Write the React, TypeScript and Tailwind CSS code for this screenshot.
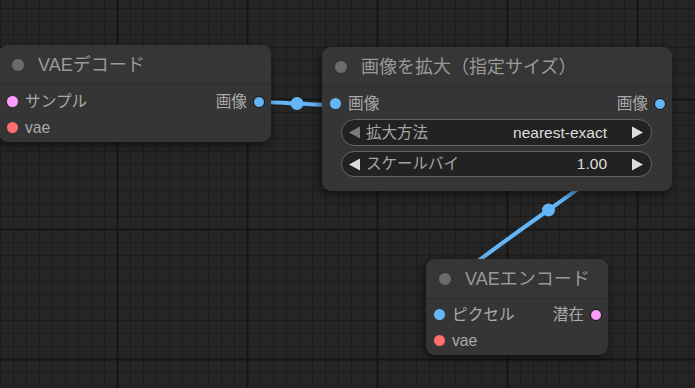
import React from "react";

const FONT = { fontFamily: '"Liberation Sans", "Noto Sans CJK JP", Arial, sans-serif' };

type Slot = { label: string; color: string };

function Dot({ color, out }: { color: string; out?: boolean }) {
  return (
    <span
      className={
        out
          ? "block w-[12px] h-[12px] rounded-full border-[1.5px] border-[#111] shrink-0"
          : "block w-[11px] h-[11px] rounded-full shrink-0"
      }
      style={{ backgroundColor: color }}
    />
  );
}

function Row({ input, output }: { input?: Slot; output?: Slot }) {
  return (
    <div className="h-[26px] flex items-center justify-between">
      <div className="flex items-center pl-[7.5px] gap-[7.5px]">
        {input && (
          <>
            <Dot color={input.color} />
            <span className="text-[15.7px] leading-none text-[#aaaaaa]">{input.label}</span>
          </>
        )}
      </div>
      <div className="flex items-center pr-[6px] gap-[6px]">
        {output && (
          <>
            <span className="text-[15.7px] leading-none text-[#aaaaaa]">{output.label}</span>
            <Dot color={output.color} out />
          </>
        )}
      </div>
    </div>
  );
}

function Arrow({ dir, dim }: { dir: "l" | "r"; dim?: boolean }) {
  return (
    <svg width="13" height="13" viewBox="0 0 13 13" className="shrink-0">
      <polygon
        points={dir === "l" ? "12,0.5 12,12.5 1,6.5" : "1,0.5 1,12.5 12,6.5"}
        fill={dim ? "#7a7a7a" : "#dddddd"}
      />
    </svg>
  );
}

function Widget({ label, value, dimLeft, h }: { label: string; value: string; dimLeft?: boolean; h: string }) {
  return (
    <div className={`${h} rounded-full border-[1.5px] border-[#646464] bg-[#222222] flex items-center pl-[6px] pr-[7px]`}>
      <Arrow dir="l" dim={dimLeft} />
      <span className="ml-[5px] text-[15.5px] leading-none text-[#a5a5a5]">{label}</span>
      <span className="ml-auto text-[15.5px] leading-none text-[#dddddd]">{value}</span>
      <span className="ml-[24px]">
        <Arrow dir="r" />
      </span>
    </div>
  );
}

function Node({
  title,
  className,
  children,
}: {
  title: string;
  className: string;
  children: React.ReactNode;
}) {
  return (
    <div
      className={`absolute rounded-[9px] bg-[#353535] shadow-[-2px_3px_8px_rgba(0,0,0,0.55)] overflow-hidden ${className}`}
    >
      <div className="h-[40px] flex items-center pl-[13px] bg-[#363636] border-b border-[#2c2c2c]">
        <span className="block w-[12px] h-[12px] rounded-full bg-[#6b6b6b]" />
        <span className="ml-[14px] text-[18px] leading-none text-[#9a9a9a]">{title}</span>
      </div>
      {children}
    </div>
  );
}

function bez(a: [number, number], b: [number, number]) {
  const d = Math.hypot(b[0] - a[0], b[1] - a[1]) * 0.25;
  const c1: [number, number] = [a[0] + d, a[1]];
  const c2: [number, number] = [b[0] - d, b[1]];
  const m: [number, number] = [
    (a[0] + 3 * c1[0] + 3 * c2[0] + b[0]) / 8,
    (a[1] + 3 * c1[1] + 3 * c2[1] + b[1]) / 8,
  ];
  return { d: `M${a[0]},${a[1]} C${c1[0]},${c1[1]} ${c2[0]},${c2[1]} ${b[0]},${b[1]}`, m };
}

export default function App() {
  const l1 = bez([259, 102], [335, 105]);
  const l2 = bez([659, 105], [438, 315]);
  const BLUE = "#64b5f6";
  const PINK = "#ff9cf9";
  const RED = "#ff6e6e";
  return (
    <div className="relative w-[695px] h-[388px] overflow-hidden bg-[#252525]" style={FONT}>
      <svg className="absolute inset-0" width="695" height="388">
        <defs>
          <pattern id="minor" x="0" y="8" width="13" height="13" patternUnits="userSpaceOnUse">
            <rect x="0" y="0" width="1" height="13" fill="#1c1c1c" />
            <rect x="0" y="0" width="13" height="1" fill="#1c1c1c" />
          </pattern>
          <pattern id="major" x="116.5" y="98.5" width="130" height="130" patternUnits="userSpaceOnUse">
            <rect x="0" y="0" width="2" height="130" fill="#151515" />
            <rect x="0" y="0" width="130" height="2" fill="#151515" />
          </pattern>
        </defs>
        <rect width="695" height="388" fill="url(#minor)" />
        <rect width="695" height="388" fill="url(#major)" />
        <path d={l1.d} stroke={BLUE} strokeWidth="4" fill="none" />
        <circle cx={l1.m[0]} cy={l1.m[1]} r="6.5" fill={BLUE} />
        <path d={l2.d} stroke={BLUE} strokeWidth="4" fill="none" />
        <circle cx={l2.m[0]} cy={l2.m[1]} r="6.5" fill={BLUE} />
      </svg>

      <Node title="VAEデコード" className="left-[-1px] top-[45px] w-[272px] h-[97px]">
        <div className="pt-[4px]">
          <Row input={{ label: "サンプル", color: PINK }} output={{ label: "画像", color: BLUE }} />
          <Row input={{ label: "vae", color: RED }} />
        </div>
      </Node>

      <Node title="画像を拡大（指定サイズ）" className="left-[322px] top-[47px] w-[350px] h-[144px]">
        <div className="pt-[4px]">
          <Row input={{ label: "画像", color: BLUE }} output={{ label: "画像", color: BLUE }} />
          <div className="flex flex-col gap-[5px] pl-[19px] pr-[20px] pt-[2px]">
            <Widget h="h-[27px]" label="拡大方法" value="nearest-exact" dimLeft />
            <Widget h="h-[26px]" label="スケールバイ" value="1.00" />
          </div>
        </div>
      </Node>

      <Node title="VAEエンコード" className="left-[426px] top-[259px] w-[182px] h-[96px]">
        <div className="pt-[3px]">
          <Row input={{ label: "ピクセル", color: BLUE }} output={{ label: "潜在", color: PINK }} />
          <Row input={{ label: "vae", color: RED }} />
        </div>
      </Node>
    </div>
  );
}
